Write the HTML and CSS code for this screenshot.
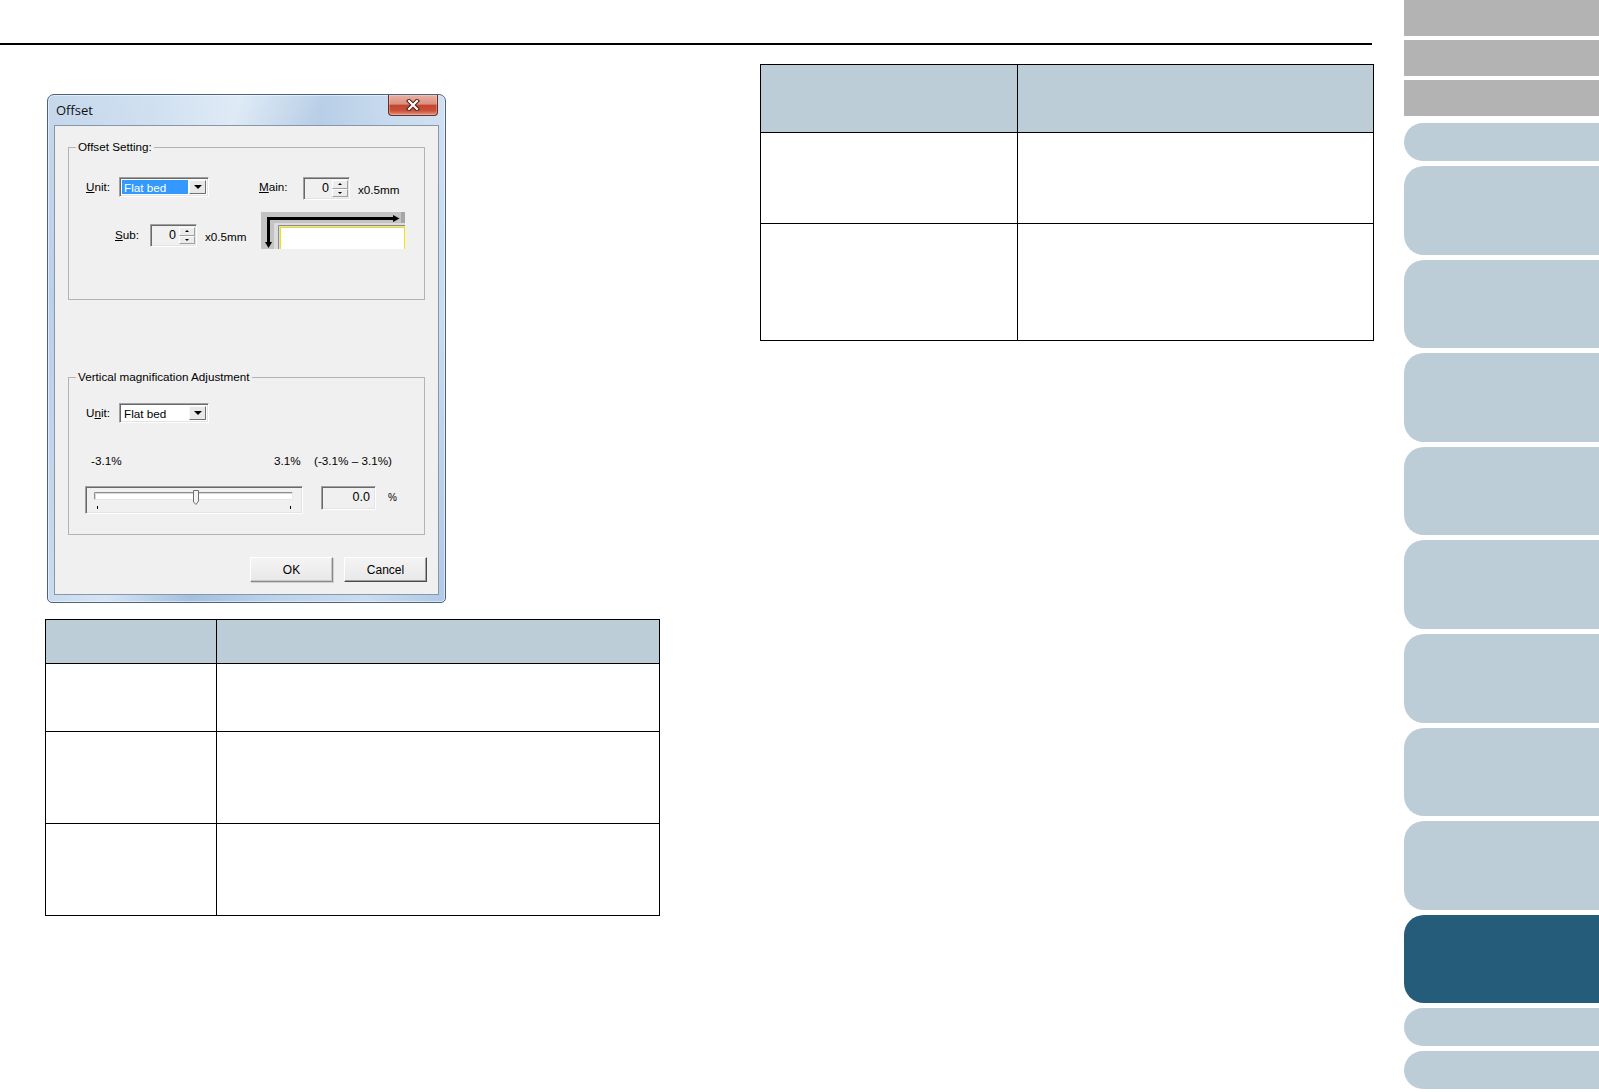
FILE: index.html
```html
<!DOCTYPE html>
<html lang="en">
<head>
    <meta charset="UTF-8">
    <title>Offset</title>
    <link rel="stylesheet" href="styles.css">
</head>
<body>
    <div class="page">
        <main class="main">
            <div class="rule"></div>

            <div class="content">
                <section class="col-left">
                    <!-- Offset dialog -->
                    <div class="dialog">
                        <div class="titlebar">
                            <span class="title">Offset</span>
                            <button class="close-btn" type="button">
                                <svg width="16" height="12" viewBox="0 0 16 12">
                                    <path d="M4 2 L12 10 M12 2 L4 10" stroke="#4a1d14" stroke-width="4.2" stroke-linecap="square"/>
                                    <path d="M4 2 L12 10 M12 2 L4 10" stroke="#ffffff" stroke-width="2.2" stroke-linecap="square"/>
                                </svg>
                            </button>
                        </div>

                        <div class="client">
                            <fieldset class="group group-offset">
                                <legend>Offset Setting:</legend>
                                <div class="row row-unit">
                                    <span class="lbl lbl-unit"><u>U</u>nit:</span>
                                    <div class="combo sunken">
                                        <span class="combo-value combo-value-active">Flat bed</span>
                                        <span class="combo-btn"><span class="arrow-down"></span></span>
                                    </div>
                                    <span class="lbl lbl-main"><u>M</u>ain:</span>
                                    <div class="spin sunken">
                                        <span class="spin-value">0</span>
                                        <span class="spin-btns">
                                            <span class="spin-btn"><span class="tri-up"></span></span>
                                            <span class="spin-btn"><span class="tri-down"></span></span>
                                        </span>
                                    </div>
                                    <span class="unit-text">x0.5mm</span>
                                </div>
                                <div class="row row-sub">
                                    <span class="lbl lbl-sub"><u>S</u>ub:</span>
                                    <div class="spin sunken spin-sub">
                                        <span class="spin-value">0</span>
                                        <span class="spin-btns">
                                            <span class="spin-btn"><span class="tri-up"></span></span>
                                            <span class="spin-btn"><span class="tri-down"></span></span>
                                        </span>
                                    </div>
                                    <span class="unit-text unit-text-sub">x0.5mm</span>
                                    <svg class="diagram" width="144" height="37" viewBox="0 0 144 37">
                                        <rect width="144" height="37" fill="#c3c3c3"/>
                                        <rect x="140" y="0" width="4" height="14" fill="#a6a6a6"/>
                                        <rect x="13" y="11" width="131" height="26" fill="#dcdcdc"/>
                                        <path d="M17.5 37 V13.5 H144" stroke="#8c8c8c" fill="none"/>
                                        <rect x="19.5" y="15.5" width="124" height="22" fill="#ffffff" stroke="#f2e200"/>
                                        <path d="M7.5 31 V6.5 H134" stroke="#000" stroke-width="3" fill="none"/>
                                        <path d="M132 3 L138.5 6.5 L132 10 Z" fill="#000"/>
                                        <path d="M4 30 L7.5 36 L11 30 Z" fill="#000"/>
                                    </svg>
                                </div>
                            </fieldset>

                            <fieldset class="group group-mag">
                                <legend>Vertical magnification Adjustment</legend>
                                <div class="row row-unit2">
                                    <span class="lbl lbl-unit">U<u>n</u>it:</span>
                                    <div class="combo sunken">
                                        <span class="combo-value">Flat bed</span>
                                        <span class="combo-btn"><span class="arrow-down"></span></span>
                                    </div>
                                </div>
                                <div class="row row-scale">
                                    <span class="scale-min">-3.1%</span>
                                    <span class="scale-max">3.1%</span>
                                    <span class="scale-range">(-3.1% – 3.1%)</span>
                                </div>
                                <div class="row row-slider">
                                    <div class="slider sunken">
                                        <svg width="216" height="26" viewBox="0 0 216 26">
                                            <rect x="8.5" y="5.5" width="198" height="7" fill="#ffffff"/>
                                            <path d="M8.5 12.5 V5.5 H206.5" stroke="#8e8e8e" fill="none"/>
                                            <path d="M9.5 12 V6.5 H206" stroke="#d8d8d8" fill="none"/>
                                            <path d="M8.5 12.5 H206.5 V5.5" stroke="#e6e6e6" fill="none"/>
                                            <path d="M107.5 3.5 H112.5 V14 L110 17.5 L107.5 15 Z" fill="#f4f4f4" stroke="#6f6f6f"/>
                                            <path d="M11.5 19 V22 M204.5 19 V22" stroke="#000"/>
                                        </svg>
                                    </div>
                                    <div class="value-box sunken">0.0</div>
                                    <span class="pct">%</span>
                                </div>
                            </fieldset>

                            <div class="buttons">
                                <button class="btn" type="button">OK</button>
                                <button class="btn btn-cancel" type="button">Cancel</button>
                            </div>
                        </div>
                    </div>

                    <div class="grid-table table-left">
                        <div class="cell cell-head"></div>
                        <div class="cell cell-head"></div>
                        <div class="cell"></div>
                        <div class="cell"></div>
                        <div class="cell"></div>
                        <div class="cell"></div>
                        <div class="cell"></div>
                        <div class="cell"></div>
                    </div>
                </section>

                <section class="col-right">
                    <div class="grid-table table-right">
                        <div class="cell cell-head"></div>
                        <div class="cell cell-head"></div>
                        <div class="cell"></div>
                        <div class="cell"></div>
                        <div class="cell"></div>
                        <div class="cell"></div>
                    </div>
                </section>
            </div>
        </main>

        <nav class="sidebar">
            <div class="tab-gray"></div>
            <div class="tab-gray"></div>
            <div class="tab-gray"></div>
            <div class="tab tab-short tab-first"></div>
            <div class="tab"></div>
            <div class="tab"></div>
            <div class="tab"></div>
            <div class="tab"></div>
            <div class="tab"></div>
            <div class="tab"></div>
            <div class="tab"></div>
            <div class="tab"></div>
            <div class="tab tab-active"></div>
            <div class="tab tab-short"></div>
            <div class="tab tab-short"></div>
        </nav>
    </div>
</body>
</html>
```

FILE: styles.css
```css
* {
    margin: 0;
    padding: 0;
    box-sizing: border-box;
}

body {
    font-family: 'Liberation Sans', Arial, sans-serif;
    background: #ffffff;
    color: #000;
}

.page {
    display: flex;
    width: 1599px;
    height: 1092px;
    overflow: hidden;
}

.main {
    width: 1404px;
    flex-shrink: 0;
}

.rule {
    margin-top: 43px;
    width: 1372px;
    height: 2px;
    background: #000;
}

.content {
    display: flex;
    align-items: flex-start;
    padding-left: 45px;
}

.col-left {
    width: 615px;
}

.col-right {
    margin-left: 100px;
    width: 614px;
    padding-top: 19px;
}

/* dialog window */
.dialog {
    margin: 49px 0 0 2px;
    width: 399px;
    height: 509px;
    border: 1px solid #4d627a;
    border-radius: 7px 7px 5px 5px;
    padding: 0 6px 7px 6px;
    display: flex;
    flex-direction: column;
    background:
        linear-gradient(to bottom, rgba(255, 255, 255, 0.25), rgba(255, 255, 255, 0) 40%),
        linear-gradient(105deg, #b3cbe6 0%, #c2d6ec 20%, #d5e4f3 36%, #a3c0e0 52%, #bcd3eb 68%, #c9dcf0 85%, #b0c9e5 100%);
    box-shadow: inset 0 0 0 1px rgba(255, 255, 255, 0.5);
}

.titlebar {
    display: flex;
    align-items: flex-start;
    height: 30px;
}

.title {
    font-family: 'Open Sans', 'Liberation Sans', sans-serif;
    font-size: 13px;
    line-height: 18px;
    margin: 6px 0 0 2px;
    color: #111;
}

.close-btn {
    margin-left: auto;
    margin-right: 1px;
    width: 50px;
    height: 21px;
    border: 1px solid #6e2b20;
    border-top: none;
    border-radius: 0 0 4px 4px;
    background: linear-gradient(#e9b0a3 0%, #dc8f7e 45%, #c4452f 52%, #c9513a 78%, #de957f 100%);
    display: flex;
    align-items: center;
    justify-content: center;
    box-shadow: inset 0 0 0 1px rgba(255, 255, 255, 0.25);
}

.client {
    height: 470px;
    border: 1px solid #8796a8;
    background: #f0f0f0;
    display: flex;
    flex-direction: column;
    font-size: 11.7px;
}

/* group boxes */
.group {
    margin: 14px 13px 0 13px;
    border: 1px solid #b3b3b3;
    min-width: 0;
}

.group legend {
    margin-left: 7px;
    padding: 0 2px;
    font-size: 11.7px;
    line-height: 14px;
}

.group-offset {
    padding-bottom: 50px;
}

.group-mag {
    margin-top: 70px;
    padding-bottom: 20px;
}

.row {
    display: flex;
    align-items: flex-start;
}

.sunken {
    border: 1px solid;
    border-color: #a0a0a0 #ffffff #ffffff #a0a0a0;
    box-shadow: inset 1px 1px 0 #696969, inset -1px -1px 0 #e3e3e3;
}

.lbl {
    line-height: 20px;
}

.row-unit {
    margin-top: 23px;
}

.lbl-unit {
    margin-left: 17px;
    width: 33px;
}

.lbl-main {
    margin-left: 50px;
    width: 44px;
}

.combo {
    width: 90px;
    height: 20px;
    background: #ffffff;
    display: flex;
    padding: 2px;
}

.combo-value {
    flex: 1;
    padding-left: 2px;
    line-height: 16px;
}

.combo-value-active {
    background: #3399ff;
    color: #ffffff;
}

.combo-btn {
    width: 17px;
    margin-left: 1px;
    border: 1px solid;
    border-color: #f8f8f8 #707070 #707070 #f8f8f8;
    background: #e8e8e8;
    display: flex;
    align-items: center;
    justify-content: center;
}

.arrow-down {
    width: 0;
    height: 0;
    border-left: 4px solid transparent;
    border-right: 4px solid transparent;
    border-top: 4px solid #000;
}

.spin {
    width: 47px;
    height: 23px;
    background: #f0f0f0;
    display: flex;
    padding: 2px 1px 2px 2px;
}

.spin-value {
    flex: 1;
    text-align: right;
    padding-right: 3px;
    line-height: 17px;
    font-size: 12.5px;
}

.spin-btns {
    width: 16px;
    display: flex;
    flex-direction: column;
}

.spin-btn {
    flex: 1;
    border: 1px solid;
    border-color: #ffffff #a0a0a0 #a0a0a0 #ffffff;
    background: #ececec;
    display: flex;
    align-items: center;
    justify-content: center;
}

.tri-up {
    width: 0;
    height: 0;
    border-left: 2px solid transparent;
    border-right: 2px solid transparent;
    border-bottom: 2px solid #000;
}

.tri-down {
    width: 0;
    height: 0;
    border-left: 2px solid transparent;
    border-right: 2px solid transparent;
    border-top: 2px solid #000;
}

.unit-text {
    margin-left: 8px;
    line-height: 23px;
    padding-top: 1px;
}

.row-sub {
    margin-top: 11px;
}

.lbl-sub {
    margin-left: 46px;
    width: 35px;
    margin-top: 12px;
    line-height: 22px;
}

.spin-sub {
    margin-top: 12px;
}

.unit-text-sub {
    width: 56px;
    margin-top: 12px;
}

.diagram {
    display: block;
}

.row-unit2 {
    margin-top: 19px;
}

.row-scale {
    margin-top: 30px;
    line-height: 16px;
}

.scale-min {
    margin-left: 22px;
    width: 183px;
}

.scale-max {
    width: 40px;
}

.row-slider {
    margin-top: 17px;
}

.slider {
    margin-left: 16px;
    width: 218px;
    height: 28px;
    background: #f0f0f0;
}

.slider svg {
    display: block;
}

.value-box {
    margin-left: 18px;
    width: 55px;
    height: 24px;
    background: #f0f0f0;
    text-align: right;
    padding-right: 5px;
    line-height: 21px;
    font-size: 12.5px;
}

.pct {
    margin-left: 12px;
    line-height: 24px;
    font-size: 10px;
}

.buttons {
    display: flex;
    justify-content: flex-end;
    gap: 11px;
    padding-right: 11px;
    margin-top: 22px;
}

.btn {
    width: 83px;
    height: 25px;
    font-family: 'Liberation Sans', Arial, sans-serif;
    font-size: 12px;
    color: #000;
    background: linear-gradient(#f4f4f4, #e8e8e8);
    border: 1px solid;
    border-color: #ffffff #8a8a8a #8a8a8a #ffffff;
    box-shadow: inset -1px -1px 0 #c8c8c8, 1px 1px 0 #d0d0d0;
}

.btn-cancel {
    border-color: #ffffff #4a4a4a #4a4a4a #ffffff;
    box-shadow: inset -1px -1px 0 #a0a0a0;
}

/* tables */
.grid-table {
    display: grid;
    border-top: 1px solid #000;
    border-left: 1px solid #000;
}

.table-left {
    margin-top: 16px;
    grid-template-columns: 171px 443px;
    grid-template-rows: 44px 68px 92px 92px;
}

.table-right {
    grid-template-columns: 257px 356px;
    grid-template-rows: 68px 91px 117px;
}

.cell {
    border-right: 1px solid #000;
    border-bottom: 1px solid #000;
}

.cell-head {
    background: #bdcdd8;
}

/* side tabs */
.sidebar {
    width: 195px;
    display: flex;
    flex-direction: column;
}

.tab-gray {
    height: 36px;
    margin-bottom: 4px;
    background: #b3b3b3;
    flex-shrink: 0;
}

.tab {
    height: 88.6px;
    margin-bottom: 5px;
    background: #bdcdd8;
    border-radius: 20px 0 0 20px;
    flex-shrink: 0;
}

.tab-short {
    height: 38px;
}

.tab-first {
    margin-top: 3px;
}

.tab-active {
    background: #255c7a;
}
```
